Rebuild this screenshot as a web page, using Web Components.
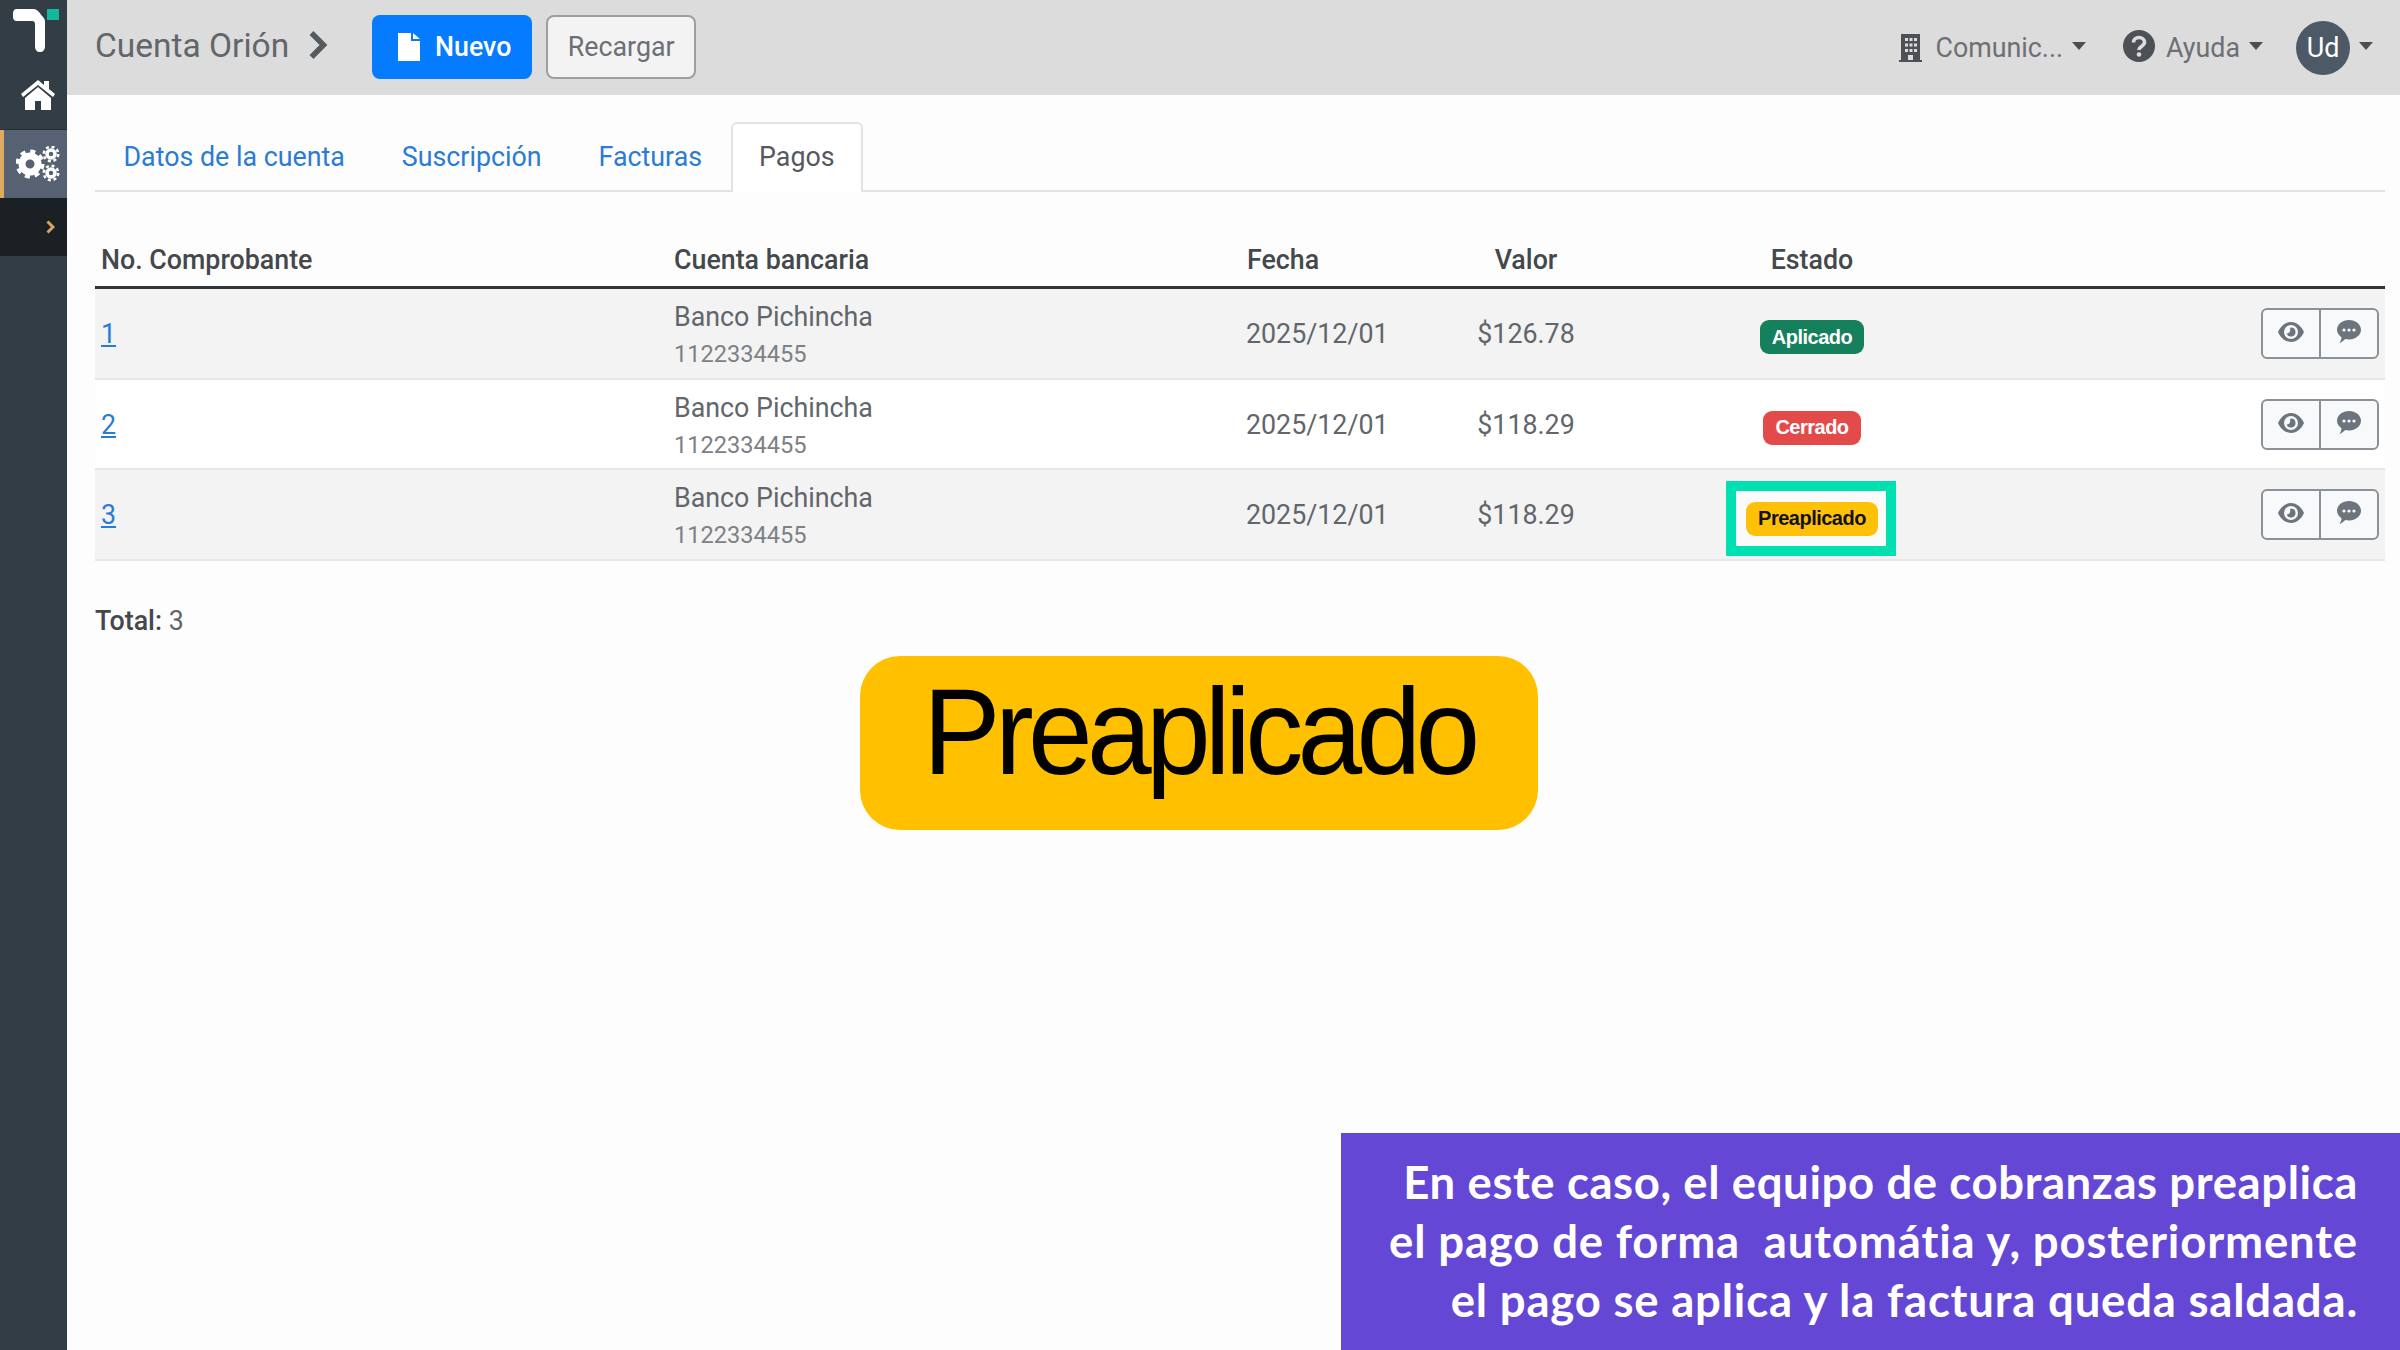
<!DOCTYPE html>
<html lang="es">
<head>
<meta charset="utf-8">
<title>Cuenta Orión</title>
<style>
  html, body { margin: 0; height: 100%; background: #fdfdfd; }
  body { font-family: Roboto, "Liberation Sans", sans-serif; overflow: hidden; }
</style>
</head>
<body>
<app-shell>
  <side-bar slot="side"></side-bar>
  <top-bar slot="top" title="Cuenta Orión"></top-bar>
  <tab-bar active="Pagos" tabs="Datos de la cuenta|Suscripción|Facturas|Pagos"></tab-bar>
  <payments-table></payments-table>
  <callout-pill slot="over">Preaplicado</callout-pill>
  <caption-panel slot="over">En este caso, el equipo de cobranzas preaplica<br><span style="letter-spacing:.84px">el pago de forma&nbsp; automátia y, posteriormente</span><br><span style="letter-spacing:.8px">el pago se aplica y la factura queda saldada.</span></caption-panel>
</app-shell>

<script>
class AppShell extends HTMLElement {
  constructor() {
    super();
    this.attachShadow({ mode: "open" }).innerHTML = `
      <style>
        :host { display: flex; position: relative; width: 2400px; height: 1350px; overflow: hidden; }
        .main { flex: 1; display: flex; flex-direction: column; min-width: 0; }
        .content { padding: 27px 15px 0 28px; }
      </style>
      <slot name="side"></slot>
      <div class="main">
        <slot name="top"></slot>
        <div class="content"><slot></slot></div>
      </div>
      <slot name="over"></slot>`;
  }
}

class SideBar extends HTMLElement {
  constructor() {
    super();
    this.attachShadow({ mode: "open" }).innerHTML = `
      <style>
        :host { display: flex; flex-direction: column; width: 67px; flex: none; background: #333d45; }
        .logo { height: 65px; display: flex; }
        .home { height: 65px; display: flex; align-items: center; justify-content: center; padding: 0 0 6px 8px; border-bottom: 1px solid #262d33; box-sizing: border-box; }
        .active { height: 68px; background: #566272; border-left: 4px solid #dcaa60; box-sizing: border-box; display: flex; align-items: center; justify-content: center; padding-left: 5px; }
        .toggle { height: 58px; background: #1b2025; display: flex; align-items: center; justify-content: flex-end; padding-right: 12px; }
        svg { display: block; }
      </style>
      <div class="logo">
        <svg width="67" height="65" viewBox="0 0 67 65">
          <path d="M17 9h16c3 0 4 1 6 3l3 4c2 2 3 3 3 6v24c0 4-2 6-5 6s-5-2-5-6V24c0-2-1-3-3-3H17c-3 0-4-2-4-5v-2c0-3 1-5 4-5z" fill="#fff"/>
          <rect x="47" y="9" width="12" height="11" fill="#14b89a"/>
        </svg>
      </div>
      <div class="home">
        <svg width="38" height="34" viewBox="0 0 38 34">
          <path d="M19 3 2 17l2 3L19 8l15 12 2-3-6-5V4h-5v4z" fill="#fff"/>
          <path d="M19 10 6 21v12h10v-9h6v9h10V21z" fill="#fff"/>
        </svg>
      </div>
      <div class="active">
        <svg width="44" height="36" viewBox="0 0 44 36">
          <g fill="none" stroke="#fff">
            <circle cx="14" cy="18" r="8" stroke-width="7"/>
            <circle cx="14" cy="18" r="12.5" stroke-width="4" stroke-dasharray="5 4.8"/>
            <circle cx="35" cy="8" r="4" stroke-width="3.5"/>
            <circle cx="35" cy="8" r="7.2" stroke-width="2.6" stroke-dasharray="3 2.7"/>
            <circle cx="35" cy="27" r="4" stroke-width="3.5"/>
            <circle cx="35" cy="27" r="7.2" stroke-width="2.6" stroke-dasharray="3 2.7"/>
          </g>
        </svg>
      </div>
      <div class="toggle">
        <svg width="9" height="14" viewBox="0 0 9 14"><path d="M1.5 1.5 7 7l-5.5 5.5" fill="none" stroke="#d9a55c" stroke-width="3"/></svg>
      </div>`;
  }
}

class TopBar extends HTMLElement {
  constructor() {
    super();
    const title = this.getAttribute("title");
    const caret = `<svg class="caret" width="14" height="8" viewBox="0 0 14 8"><path d="M0 0h14L7 8z" fill="#4a4f54"/></svg>`;
    this.attachShadow({ mode: "open" }).innerHTML = `
      <style>
        :host { display: flex; align-items: center; height: 95px; flex: none; box-sizing: border-box; background: #dcdcdc; padding-left: 28px; color: #6c7075; font-size: 26.8px; }
        .title { font-size: 33.5px; color: #62666a; margin: -5px 19px 0 0; }
        .chev { margin: -5px 44px 0 0; display: block; }
        .btn { height: 64px; box-sizing: border-box; border-radius: 8px; display: flex; align-items: center; justify-content: center; margin-top: -2px; }
        .new { width: 160px; padding-left: 5px; background: #057bff; color: #fff; font-weight: 500; gap: 15px; margin-right: 14px; }
        .reload { width: 150px; background: #f3f3f3; border: 2px solid #9c9fa2; color: #6c7075; }
        .right { margin-left: auto; display: flex; align-items: center; height: 100%; padding-right: 27px; }
        .item { display: flex; align-items: center; }
        .caret { margin-left: 9px; margin-top: -3px; display: block; }
        .avatar { width: 54px; height: 54px; border-radius: 50%; background: #4d5a66; color: #fff; display: flex; align-items: center; justify-content: center; font-size: 27px; }
      </style>
      <span class="title">${title}</span>
      <svg class="chev" width="20" height="30" viewBox="0 0 20 30"><path d="M3.5 3 15.5 15l-12 12" fill="none" stroke="#555a5e" stroke-width="5.5"/></svg>
      <div class="btn new">
        <svg width="22" height="28" viewBox="0 0 22 28"><path d="M0 0h13v8h9v20H0zM15 0l7 6h-7z" fill="#fff"/></svg>
        Nuevo
      </div>
      <div class="btn reload">Recargar</div>
      <div class="right">
        <div class="item" style="margin-right:37px">
          <svg width="23" height="28" viewBox="0 0 23 28" style="margin-right:13px">
            <path fill-rule="evenodd" fill="#4d5155" d="M2 0h19v26h2v2H0v-2h2zM6 4v3h3V4zm4.5 0v3h3V4zM15 4v3h3V4zM6 9.500v3h3v-3zm4.500 0v3h3v-3zm4.500 0v3h3v-3zM6 15v3h3v-3zm4.500 0v3h3v-3zm4.500 0v3h3v-3zM9 21v5h5v-5z"/>
          </svg>
          Comunic...${caret}
        </div>
        <div class="item" style="margin-right:33px">
          <svg width="32" height="32" viewBox="0 0 32 32" style="margin-right:11px;margin-top:-4px">
            <circle cx="16" cy="16" r="16" fill="#4d5155"/>
            <path d="M10.500 12.500c0-3 2.500-5 5.500-5s5.500 2 5.500 4.800c0 4-5.500 3.700-5.500 7.700" fill="none" stroke="#dcdcdc" stroke-width="3.600"/>
            <circle cx="16" cy="24.500" r="2.300" fill="#dcdcdc"/>
          </svg>
          Ayuda${caret}
        </div>
        <div class="item">
          <span class="avatar">Ud</span>${caret}
        </div>
      </div>`;
  }
}

class TabBar extends HTMLElement {
  constructor() {
    super();
    const active = this.getAttribute("active");
    const tabs = this.getAttribute("tabs").split("|");
    this.attachShadow({ mode: "open" }).innerHTML = `
      <style>
        :host { display: flex; height: 70px; box-sizing: border-box; border-bottom: 2px solid #e2e3e4; font-size: 26.8px; }
        .tab { padding: 0 26.5px 3px; height: 70px; box-sizing: border-box; display: flex; align-items: center; color: #2a7bd6; border: 2px solid transparent; border-bottom: 0; border-radius: 6px 6px 0 0; }
        .tab:first-child { margin-left: -.5px; }
        .tab.on { color: #55595e; background: #fff; border-color: #e2e3e4; }
      </style>
      ${tabs.map((t) => `<div class="tab ${t === active ? "on" : ""}">${t}</div>`).join("")}`;
  }
}

class StatusBadge extends HTMLElement {
  constructor() {
    super();
    this.attachShadow({ mode: "open" }).innerHTML = `
      <style>
        :host { display: inline-flex; align-items: center; justify-content: center; height: 34px; padding: 0 12px; border-radius: 9px; font: 700 20px "Liberation Sans", sans-serif; letter-spacing: -.5px; background: var(--badge-bg); color: var(--badge-fg, #fff); }
      </style>
      <slot></slot>`;
  }
}

class PaymentRow extends HTMLElement {
  constructor() {
    super();
    const a = (n) => this.getAttribute(n);
    const mark = this.hasAttribute("marked");
    this.attachShadow({ mode: "open" }).innerHTML = `
      <style>
        :host { display: grid; grid-template-columns: 573px 573px 215px 140px 432px 1fr; height: 90.5px; box-sizing: border-box; padding-top: 2px; border-bottom: 2px solid #e6e7e8; align-items: center; color: #62666a; font-size: 26.8px; background: var(--row-bg, #fff); }
        .num { padding-left: 6px; color: #2a7bd6; text-decoration: underline; }
        .bank { padding: 3px 0 0 6px; line-height: 36px; }
        .acct { font-size: 23.6px; color: #7d8185; }
        .date { padding-left: 5px; }
        .val { text-align: center; }
        .state { display: flex; justify-content: center; position: relative; top: 3px; }
        .mark { position: absolute; left: 50%; top: 50%; width: 170px; height: 75px; margin: -37px 0 0 -86px; padding-left: 2px; box-sizing: border-box; border: 10px solid #00e0b0; background: #fafafa; display: flex; align-items: center; justify-content: center; }
        .acts { justify-self: end; margin-right: 6px; display: flex; height: 51px; margin-top: -1px; box-sizing: border-box; border: 2px solid #8b9196; border-radius: 6px; background: #f8f9fa; }
        .acts div { width: 56px; display: flex; align-items: center; justify-content: center; }
        .acts div + div { border-left: 2px solid #8b9196; }
        status-badge { --badge-bg: ${a("bg")}; --badge-fg: ${a("fg") || "#fff"}; }
        svg { display: block; margin-top: -3px; }
      </style>
      <span class="num">${a("num")}</span>
      <div class="bank">Banco Pichincha<br><span class="acct">1122334455</span></div>
      <span class="date">2025/12/01</span>
      <span class="val">${a("val")}</span>
      <div class="state">
        ${mark ? `<div class="mark"><status-badge>${a("state")}</status-badge></div>` : `<status-badge>${a("state")}</status-badge>`}
      </div>
      <div class="acts">
        <div>
          <svg width="26" height="20" viewBox="0 0 26 20">
            <path fill-rule="evenodd" fill="#6c757d" d="M13 0c6 0 10.500 4.500 13 10-2.500 5.500-7 10-13 10S2.500 15.500 0 10C2.500 4.500 7 0 13 0zm0 3a7 7 0 1 0 0 14 7 7 0 0 0 0-14z"/>
            <path fill="#6c757d" d="M13 5.500a4.500 4.500 0 1 1-4.300 5.800c1.800.5 4-1.200 3.500-3.800-.2-.8 0-1.700.8-2z"/>
          </svg>
        </div>
        <div>
          <svg width="24" height="24" viewBox="0 0 24 24">
            <path fill="#6c757d" d="M12 0c6.600 0 12 4.300 12 9.700s-5.400 9.700-12 9.700c-1.300 0-2.500-.2-3.600-.5C6.500 20.700 4 22.500 2.500 23c1-1.500 1.800-3.500 2-5.800C2 15.400 0 12.700 0 9.700 0 4.300 5.400 0 12 0z"/>
            <circle cx="7" cy="10" r="1.600" fill="#f8f9fa"/><circle cx="12" cy="10" r="1.600" fill="#f8f9fa"/><circle cx="17" cy="10" r="1.600" fill="#f8f9fa"/>
          </svg>
        </div>
      </div>`;
  }
}

class PaymentsTable extends HTMLElement {
  constructor() {
    super();
    this.attachShadow({ mode: "open" }).innerHTML = `
      <style>
        :host { display: block; margin-top: 26px; }
        .head { display: grid; grid-template-columns: 573px 573px 215px 140px 432px 1fr; height: 71px; box-sizing: border-box; align-items: center; padding-top: 15px; border-bottom: 3px solid #2f3337; font-size: 26.8px; font-weight: 500; color: #44484c; }
        .head span:nth-child(-n+3) { padding-left: 6px; }
        .c { text-align: center; }
        payment-row:nth-child(odd) { --row-bg: #f3f3f3; }
        .total { margin-top: 44px; font-size: 26.8px; color: #62666a; }
        .total b { font-weight: 500; color: #44484c; }
      </style>
      <div class="head"><span>No. Comprobante</span><span>Cuenta bancaria</span><span>Fecha</span><span class="c">Valor</span><span class="c">Estado</span><span></span></div>
      <div>
        <payment-row num="1" val="$126.78" state="Aplicado" bg="#14805c"></payment-row>
        <payment-row num="2" val="$118.29" state="Cerrado" bg="#e34b4b"></payment-row>
        <payment-row num="3" val="$118.29" state="Preaplicado" bg="#ffc107" fg="#111" marked></payment-row>
      </div>
      <div class="total"><b>Total:</b> 3</div>`;
  }
}

class CalloutPill extends HTMLElement {
  constructor() {
    super();
    this.attachShadow({ mode: "open" }).innerHTML = `
      <style>
        :host { position: absolute; left: 860px; top: 656px; width: 678px; height: 174px; box-sizing: border-box; border-radius: 40px; background: #ffc000; color: #000; display: flex; justify-content: center; font: 400 123px/1 "Liberation Sans", sans-serif; letter-spacing: -6px; padding-top: 14px; }
        span { display: block; transform: scaleX(.945); }
      </style>
      <span><slot></slot></span>`;
  }
}

class CaptionPanel extends HTMLElement {
  constructor() {
    super();
    this.attachShadow({ mode: "open" }).innerHTML = `
      <style>
        :host { position: absolute; left: 1341px; top: 1133px; width: 1059px; height: 217px; box-sizing: border-box; background: #6547d6; color: #fff; padding: 19px 42px 0 0; text-align: right; font: 700 45.5px/59px Lato, "Open Sans", sans-serif; letter-spacing: .6px; }
      </style>
      <slot></slot>`;
  }
}

customElements.define("app-shell", AppShell);
customElements.define("side-bar", SideBar);
customElements.define("top-bar", TopBar);
customElements.define("tab-bar", TabBar);
customElements.define("status-badge", StatusBadge);
customElements.define("payment-row", PaymentRow);
customElements.define("payments-table", PaymentsTable);
customElements.define("callout-pill", CalloutPill);
customElements.define("caption-panel", CaptionPanel);
</script>
</body>
</html>
